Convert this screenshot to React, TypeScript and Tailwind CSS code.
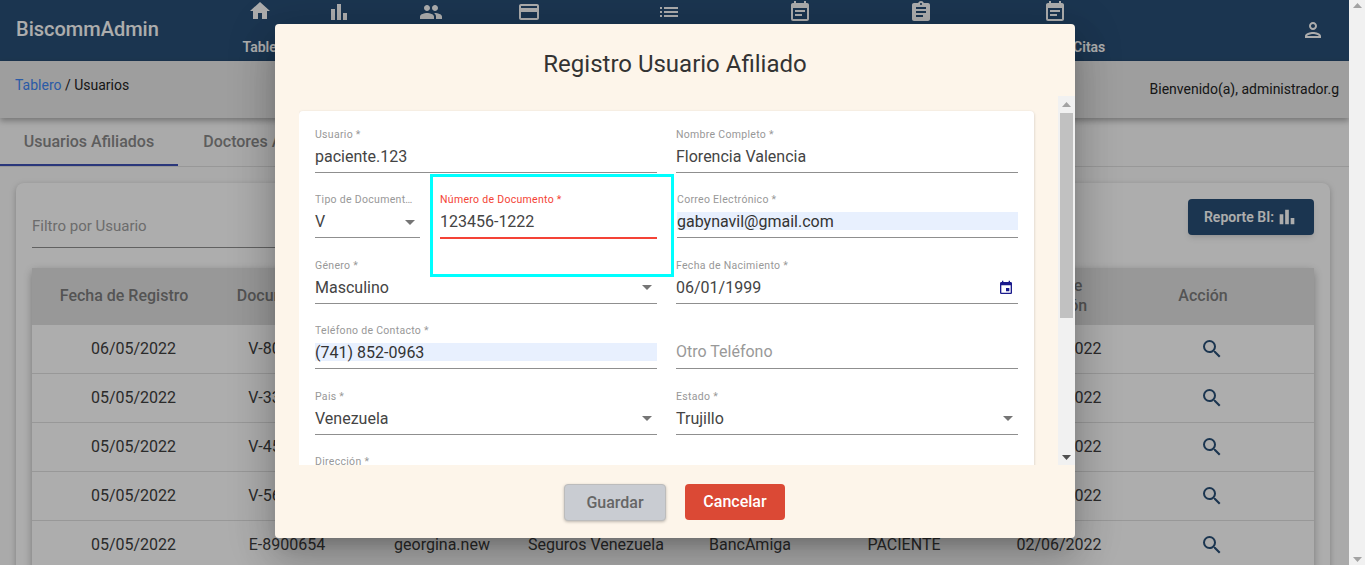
import {
  MdAssignment,
  MdBarChart,
  MdEvent,
  MdEventNote,
  MdHome,
  MdList,
  MdOutlineCreditCard,
  MdOutlinePerson,
  MdPeople,
  MdSearch,
} from "react-icons/md";
import type { ReactNode } from "react";

const navItems = [
  { icon: <MdHome className="-mt-px" />, label: "Tablero", width: "w-[80px]", labelClass: "pl-[12px]" },
  { icon: <MdBarChart />, label: "", width: "w-[78px]", labelClass: "" },
  { icon: <MdPeople />, label: "", width: "w-[106px]", labelClass: "" },
  { icon: <MdOutlineCreditCard />, label: "", width: "w-[90px]", labelClass: "" },
  { icon: <MdList />, label: "", width: "w-[190px]", labelClass: "" },
  { icon: <MdEventNote />, label: "", width: "w-[72px]", labelClass: "" },
  { icon: <MdAssignment />, label: "", width: "w-[170px]", labelClass: "" },
  { icon: <MdEventNote />, label: "Agenda de Citas", width: "w-[98px]", labelClass: "pr-[2px]" },
];

// cells that sit fully behind the dialog are left empty
const rows = [
  ["06/05/2022", "V-8012345", "", "", "", "", "06/06/2022"],
  ["05/05/2022", "V-3345678", "", "", "", "", "05/06/2022"],
  ["05/05/2022", "V-4523456", "", "", "", "", "05/06/2022"],
  ["05/05/2022", "V-5678901", "", "", "", "", "05/06/2022"],
  ["05/05/2022", "E-8900654", "georgina.new", "Seguros Venezuela", "BancAmiga", "PACIENTE", "02/06/2022"],
];

const colWidths = "grid-cols-[184px_142px_168px_140px_168px_140px_170px_170px]";

function Arrow() {
  return (
    <svg width="10" height="5" viewBox="0 0 10 5" className="shrink-0 fill-[#757575]">
      <path d="M0 0h10L5 5z" />
    </svg>
  );
}

function ScrollArrow({ up, color }: { up?: boolean; color: string }) {
  return (
    <svg width="9" height="5" viewBox="0 0 9 5" className={color}>
      <path d={up ? "M0 5h9L4.5 0z" : "M0 0h9L4.5 5z"} />
    </svg>
  );
}

function Field({
  label,
  value,
  placeholder,
  select,
  autofill,
  error,
  suffix,
}: {
  label?: string;
  value?: string;
  placeholder?: string;
  select?: boolean;
  autofill?: boolean;
  error?: boolean;
  suffix?: ReactNode;
}) {
  return (
    <div className="h-[65.5px] min-w-0">
      <div
        className={`h-[14px] truncate pr-[6px] pt-px text-[10.5px] leading-[13px] tracking-[0.3px] ${
          error ? "text-[#f44336]" : "text-[#989898]"
        }`}
      >
        {label}
      </div>
      <div
        className={`mt-[6px] flex h-[18px] items-center justify-between text-[16px] leading-[18px] ${
          placeholder ? "" : "pt-[2px]"
        } ${autofill ? "bg-[#e8f0fe] text-[#333]" : "text-[#444]"}`}
      >
        {placeholder ? <span className="text-[#999]">{placeholder}</span> : <span>{value}</span>}
        {select && (
          <span className="pr-[5px]">
            <Arrow />
          </span>
        )}
        {suffix}
      </div>
      <div className={`mt-[7px] ${error ? "h-[2px] bg-[#f44336]" : "h-px bg-[#8f8f8f]"}`} />
    </div>
  );
}

export default function App() {
  return (
    <div className="relative flex h-[565px] overflow-hidden bg-[#f1f1f1] font-['Roboto',sans-serif]">
      <div className="h-[565px] w-[1349px] shrink-0 overflow-hidden bg-[#fbfbfb]">
        <header className="flex h-[61px] bg-[#294f76] text-white">
          <div className="w-[220px] pl-4 pt-[16px] text-[20px] font-medium leading-[26px]">BiscommAdmin</div>
          <nav className="flex">
            {navItems.map((item, i) => (
              <div key={i} className={`flex ${item.width} flex-col items-center`}>
                <span className="h-[24px] text-[24px] leading-none">{item.icon}</span>
                <span className={`mt-[15px] whitespace-nowrap text-[14px] font-semibold leading-4 ${item.labelClass}`}>
                  {item.label}
                </span>
              </div>
            ))}
          </nav>
          <div className="ml-auto pr-[24px] pt-[18px] text-[24px]">
            <MdOutlinePerson />
          </div>
        </header>

        <div className="relative flex h-[57px] justify-between bg-[#e9e9e9] shadow-[0_3px_6px_rgba(0,0,0,0.3)]">
          <div className="pl-[15px] pt-[16px] text-[14px] leading-4 text-[#222]">
            <span className="text-[#3f86f5]">Tablero</span> / Usuarios
          </div>
          <div className="pr-[10px] pt-[20px] text-[14px] leading-4 text-[#222]">Bienvenido(a), administrador.g</div>
        </div>

        <div className="flex h-[49px] border-b border-[#e1e1e1] text-[16px] font-medium text-[#8a8a8a]">
          <div className="flex h-[48px] w-[178px] items-center justify-center border-b-2 border-[#3f51b5] pt-[2px]">
            Usuarios Afiliados
          </div>
          <div className="flex h-[48px] w-[178px] items-center justify-center pl-[4px]">Doctores Afiliados</div>
        </div>

        <section className="ml-4 mr-[19px] mt-[16px] h-[500px] rounded-lg bg-white px-4 pt-4 shadow-[0_2px_6px_rgba(0,0,0,0.25)]">
          <div className="flex items-start justify-between">
            <div className="w-[400px] border-b border-[#8f8f8f] pb-[13px] pt-[19px] text-[15px] leading-4 text-[#a0a0a0]">
              Filtro por Usuario
            </div>
            <button className="flex h-[36px] w-[126px] items-center justify-center gap-[2px] rounded bg-[#294f76] text-[14px] font-semibold text-white shadow-md">
              Reporte BI: <MdBarChart className="text-[22px]" />
            </button>
          </div>

          <div className="mt-[20px] rounded shadow-[0_3px_8px_rgba(0,0,0,0.3)]">
            <div className={`grid h-[57px] ${colWidths} items-center bg-[#e1e1e1] pb-[2px] text-center text-[16px] font-medium leading-5 text-[#7c7c7c]`}>
              <div>Fecha de Registro</div>
              <div className="whitespace-nowrap pl-[4px]">Documento Id.</div>
              <div />
              <div />
              <div />
              <div />
              <div className="pr-[18px]">
                Fecha de
                <br />
                Expiración
              </div>
              <div className="pr-[52px]">Acción</div>
            </div>
            {rows.map((row, i) => (
              <div
                key={i}
                className={`grid h-[49px] ${colWidths} items-center border-b border-[#e1e1e1] text-center text-[16px] text-[#404040]`}
              >
                {row.map((cell, j) => (
                  <div key={j} className={j === 0 ? "pl-[19px]" : ""}>
                    {cell}
                  </div>
                ))}
                <div className="flex justify-center pr-[34px] text-[24px] text-[#294f76]">
                  <MdSearch />
                </div>
              </div>
            ))}
          </div>
        </section>
      </div>

      {/* page scrollbar */}
      <div className="flex w-4 flex-col items-center justify-between py-[3px]">
        <ScrollArrow up color="fill-[#a3a3a3]" />
        <ScrollArrow color="fill-[#a3a3a3]" />
      </div>

      <div className="absolute inset-y-0 left-0 w-[1349px] bg-black/32" />

      {/* dialog */}
      <div className="absolute left-[275px] top-[24px] flex h-[514px] w-[800px] flex-col rounded bg-[#fdf5ea] shadow-[0_11px_15px_-7px_rgba(0,0,0,0.2),0_24px_38px_3px_rgba(0,0,0,0.14),0_9px_46px_8px_rgba(0,0,0,0.12)]">
        <h2 className="h-[72px] pt-[23px] text-center text-[24px] leading-[34px] text-[#333]">
          Registro Usuario Afiliado
        </h2>

        <div className="flex h-[369px] pl-[24px]">
          <div className="h-full flex-1 overflow-hidden pt-[15px]">
            <div className="h-[600px] w-[735px] rounded bg-white px-4 pt-[15.5px] shadow-[0_1px_3px_rgba(0,0,0,0.2)]">
              <div className="grid grid-cols-2 gap-x-[19px]">
                <Field label="Usuario *" value="paciente.123" />
                <Field label="Nombre Completo *" value="Florencia Valencia" />
                <div className="flex gap-[20px]">
                  <div className="w-[105px] shrink-0">
                    <Field label="Tipo de Documento *" value="V" select />
                  </div>
                  <div className="min-w-0 flex-1">
                    <Field label="Número de Documento *" value="123456-1222" error />
                  </div>
                </div>
                <div className="pl-px">
                  <Field label="Correo Electrónico *" value="gabynavil@gmail.com" autofill />
                </div>
                <Field label="Género *" value="Masculino" select />
                <Field
                  label="Fecha de Nacimiento *"
                  value="06/01/1999"
                  suffix={<MdEvent className="mr-[4px] text-[16px] text-[#1a1a8c]" />}
                />
                <Field label="Teléfono de Contacto *" value="(741) 852-0963" autofill />
                <Field placeholder="Otro Teléfono" />
                <Field label="Pais *" value="Venezuela" select />
                <Field label="Estado *" value="Trujillo" select />
                <Field label="Dirección *" />
              </div>
            </div>
          </div>

          {/* dialog scrollbar */}
          <div className="flex h-full w-[17px] shrink-0 flex-col items-center bg-[#f1f1f1]">
            <div className="flex h-[17px] items-center">
              <ScrollArrow up color="fill-[#a3a3a3]" />
            </div>
            <div className="h-[205px] w-[13px] bg-[#c1c1c1]" />
            <div className="mt-auto flex h-[17px] items-center pt-[2px]">
              <ScrollArrow color="fill-[#505050]" />
            </div>
          </div>
        </div>

        <div className="flex flex-1 justify-center gap-[19px] pr-px pt-[19px]">
          <button className="h-[37px] w-[102px] rounded border border-[#bcbcbc] bg-[#c9ccd2] text-[16px] font-medium text-[#666] shadow-[0_1px_3px_rgba(0,0,0,0.25)]">
            Guardar
          </button>
          <button className="h-[36px] w-[100px] rounded bg-[#db4935] text-[16px] font-medium text-white">
            Cancelar
          </button>
        </div>
      </div>

      {/* highlight marker around the invalid field */}
      <div className="absolute left-[430px] top-[174px] h-[103px] w-[244px] border-[3px] border-[#00ffff]" />
    </div>
  );
}
